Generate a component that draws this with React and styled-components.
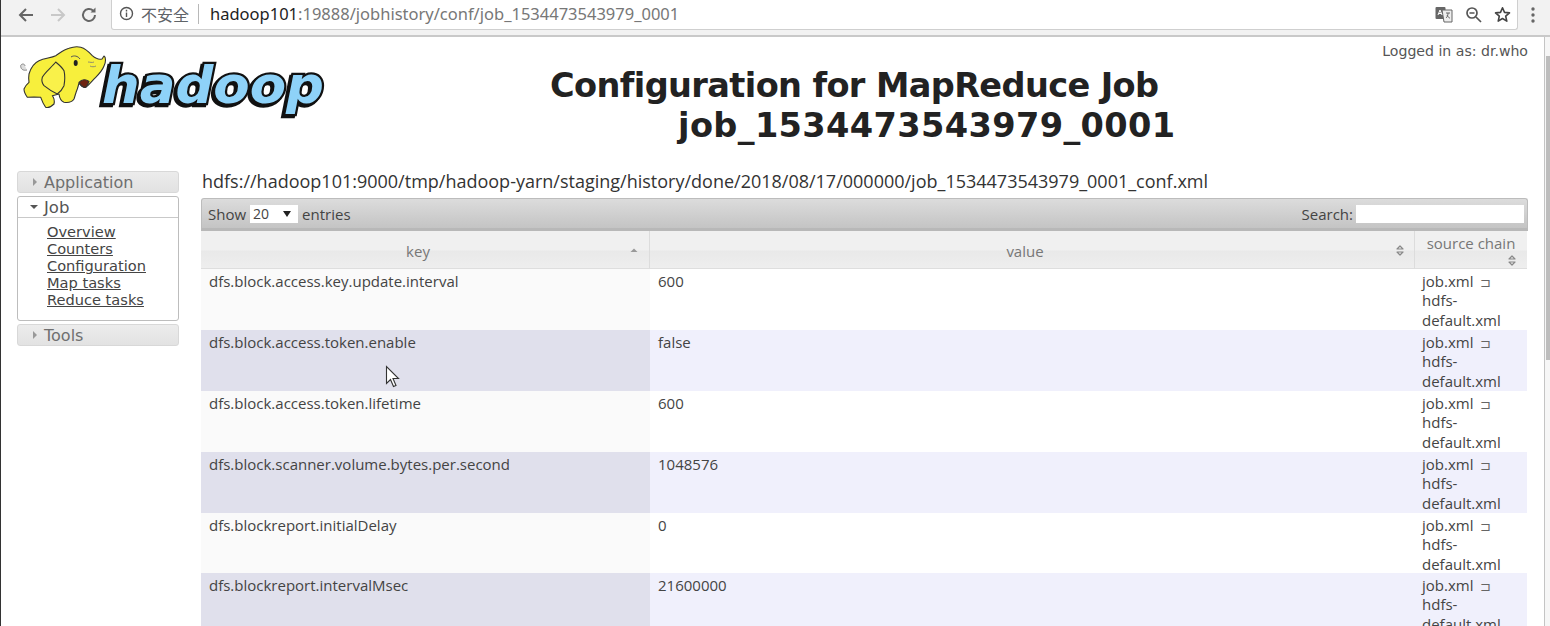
import React from 'react';
import styled, { createGlobalStyle } from 'styled-components';

const Global = createGlobalStyle`
  html, body { margin: 0; padding: 0; height: 626px; overflow: hidden; background: #fff; }
  * { box-sizing: border-box; }
`;
const Shell = styled.div`
  width: 1550px; height: 626px; display: flex; flex-direction: column; position: relative; overflow: hidden;
  border-left: 1px solid #333; color: #333;
`;
const ChromeBar = styled.header`
  height: 37px; flex: none; background: #f2f2f2; border-bottom: 2px solid #c9c9c9;
  display: flex; align-items: flex-start; padding: 0 0 0 16px;
`;
const NavIcons = styled.div`
  display: flex; width: 94px; height: 29px; align-items: center; gap: 9px; flex: none;
`;
const AddressBar = styled.div`
  width: 1407px; height: 30px; flex: none; background: #fff; border: 1px solid #cfcfcf; border-top: 0; border-radius: 0 0 3px 3px;
  display: flex; align-items: center; padding: 0 6px 2px 7px; font: 16.5px "Noto Sans", "Noto Sans CJK SC", sans-serif;
`;
const Insecure = styled.span`
  font: 16px "Noto Sans CJK SC", sans-serif; color: #5f6368; margin-left: 7px; padding-right: 9px; margin-right: 11px;
  border-right: 1px solid #b8b8b8; line-height: 20px;
`;
const Host = styled.span` color: #222; `;
const Path = styled.span` color: #777; `;
const AddressEnd = styled.div`
  margin-left: auto; display: flex; align-items: center; gap: 12px; padding-top: 2px;
`;
const MoreDots = styled.div`
  width: 30px; height: 30px; display: flex; align-items: center; justify-content: center; flex: none;
`;
const Viewport = styled.div` flex: 1; display: flex; min-height: 0; `;
const Page = styled.main`
  width: 1544px; flex: none; border-right: 1px solid #c4c4c4; padding: 0 16px 0 16px; overflow: hidden;
  font-family: "DejaVu Sans", sans-serif;
`;
const Gutter = styled.div` flex: 1; background: #f6f6f6; padding: 19px 0 0 1px; `;
const Thumb = styled.div` height: 304px; background: #bdbdbd; `;
const Masthead = styled.div`
  height: 133px; display: flex; position: relative;
`;
const LogoWrap = styled.div` width: 320px; flex: none; padding: 5px 0 0 1px; `;
const TitleBlock = styled.h1`
  margin: 0; padding: 29px 0 0 213px; font: bold 33.6px/40px "DejaVu Sans", sans-serif; color: #222; white-space: nowrap;
`;
const TitleLine = styled.div`
  padding-left: ${p => p.$indent || 0}px; letter-spacing: ${p => p.$spacing}px;
`;
const LoggedIn = styled.div`
  position: absolute; right: 0; top: 6px; font-size: 14.1px; color: #555;
`;
const Columns = styled.div` display: flex; gap: 22px; align-items: flex-start; `;
const Sidebar = styled.nav` width: 162px; flex: none; display: flex; flex-direction: column; gap: 3px; margin-top: 1px; `;
const ClosedHead = styled.div`
  height: 22px; border: 1px solid #d8d8d8; border-radius: 3px; display: flex; align-items: center;
  background: linear-gradient(#ececec, #e2e2e2); color: #6f6f6f; font-size: 16px; padding-left: 14px; gap: 6px;
`;
const OpenPanel = styled.div` border: 1px solid #bdbdbd; border-radius: 3px; background: #fff; height: 125px; `;
const OpenHead = styled.div`
  height: 21px; border-bottom: 1px solid #c9c9c9; display: flex; align-items: center; padding-left: 12px; gap: 6px; font-size: 16.5px; color: #555;
`;
const NavList = styled.div` display: flex; flex-direction: column; padding: 5px 0 0 29px; `;
const NavLink = styled.a` font-size: 14.6px; line-height: 17.1px; color: #444; text-decoration: underline; `;
const Content = styled.section` flex: 1; min-width: 0; `;
const FilePath = styled.div`
  height: 28px; padding-left: 1px; font: 18px/22px "Open Sans", sans-serif; color: #333; white-space: nowrap;
`;
const TableBar = styled.div`
  height: 33px; background: linear-gradient(#dcdcdc, #c4c4c4); border: 1px solid #bcbcbc; border-bottom: 3px solid #b8b8b8; border-radius: 3px 3px 0 0;
  display: flex; align-items: center; justify-content: space-between; padding: 0 3px 0 6px;
  font: 15px "Open Sans", sans-serif; color: #444;
`;
const Show = styled.div` display: flex; align-items: center; gap: 4px; `;
const Select = styled.div`
  width: 48px; height: 18px; background: #fff; display: flex; align-items: center; justify-content: space-between; padding: 0 7px 0 3px; font-size: 14px; color: #444;
`;
const Caret = styled.span`
  width: 0; height: 0; border-left: 4px solid transparent; border-right: 4px solid transparent; border-top: 6px solid #222;
`;
const SearchBox = styled.div` display: flex; align-items: center; gap: 3px; `;
const SearchInput = styled.div` width: 168px; height: 18px; background: #fff; `;
const Table = styled.div`
  display: grid; grid-template-columns: 449px 765px 112px; font: 15px/19.4px "Open Sans", sans-serif; color: #444;
`;
const HeadCell = styled.div`
  height: 38px; background: linear-gradient(#f0f0f0 0%, #f0f0f0 50%, #e9e9e9 55%, #eeeeee 100%); border-right: 1px solid #dcdcdc; border-bottom: 1px solid #dedede;
  display: flex; align-items: center; justify-content: center; position: relative; color: #777; font-size: 15px; padding: 4px 14px 0 0;
`;
const SortMark = styled.svg` position: absolute; right: ${p => p.$right}px; top: ${p => p.$top}px; `;
const SourceHead = styled(HeadCell)` align-items: flex-start; padding: 3px 0 0; border-right: 0; `;
const Cell = styled.div`
  height: ${p => p.$h}px; padding: 3px 8px 0; background: ${p => p.$bg};
`;
const SourceCell = styled(Cell)` padding-left: 7px; `;
const Chain = styled.span` color: #666; padding-left: 3px; font-size: 13px; line-height: 1; `;
const Cursor = styled.svg` position: absolute; left: 384px; top: 365px; `;

const Sort = ({ right, top, up }) => (
  <SortMark $right={right} $top={top} width="10" height="13" viewBox="0 0 10 13">
    {up ? <path d="M1.5 8 L5 4.5 L8.5 8 Z" fill="#999" /> : (
      <path d="M2 5 L5 2 L8 5 Z M2 8 L5 11 L8 8 Z" fill="none" stroke="#888" strokeWidth="1.2" strokeLinejoin="round" />
    )}
  </SortMark>
);

const Logo = () => (
  <svg width="312" height="80" viewBox="0 0 312 80">
    <text x="84" y="61" fontFamily="'DejaVu Sans', sans-serif" fontWeight="700" fontStyle="italic" fontSize="52"
      textLength="222" lengthAdjust="spacingAndGlyphs" fill="#8ed2f8" stroke="#111" strokeWidth="4.5" paintOrder="stroke" strokeLinejoin="miter"
      style={{ filter: 'drop-shadow(-2px 2px 0 #111)' }}>hadoop</text>
    <path d="M9 28 C5 29 2.5 27 2.7 23.5 C4 21 7 22 7 24" fill="#ddd" stroke="#888" strokeWidth="1" />
    <g stroke="#333" strokeWidth="1.1" strokeLinejoin="round">
      <path d="M11 32 C13 25 16 21 21 18.7 C27 16 33 16 37.7 13.7 C42 11 46 7.5 51 6.3 C56 4.5 60 4.5 62.7 5.3 C67 6.5 71 10 74.3 13.7 C77 16 81 18 84 17 L86 14 C88 15 88 20 86 24 C84.5 28 81 32 77.7 35.3 C74 39 71 43 67.7 45.3 C65 46 63 44 61 41 C60.5 43 60 45 59.3 47 C58 50 57 54 56 57 C54 60 50 61 46 60.3 C43 59 41.5 56 41 52 L34.3 53.7 C36 56 36.5 60 36 62 C33 65 30 66 27.7 65.3 C25 62 24 59 22.7 55.3 L16 55 L9.3 55.3 C7 52 6 50 6 47 C7 44 9 42 11 40.3 C10.5 37 10.5 35 11 32 Z" fill="#f7ef3c" />
      <path d="M37.7 20 C34 25 27 30 24.3 35.3 C23.5 38 24 41 26 43.7 C30 47 35 50 39.3 52 C42 50 44.5 47 46 43.7 C47 38 47 33 46 28.7 C44 25 40 22 37.7 20 Z" fill="#f9f14a" />
      <path d="M61 40.3 C64 37 68 37 71 39.5 C70 42 69 44 67.7 45.3 C65 46 63 44 61 40.3 Z" fill="#6e2412" />
    </g>
    <ellipse cx="57.7" cy="21" rx="2" ry="3" fill="#222" />
    <path d="M53 15 C56 13 60 14 62 17" fill="none" stroke="#555" strokeWidth="1" />
    <path d="M70 20 C72 20 74 21 76 20 M72 24 C74 25 76 25 78 24" fill="none" stroke="#777" strokeWidth="0.8" />
  </svg>
);

const rows = [
  ['dfs.block.access.key.update.interval', '600', 61],
  ['dfs.block.access.token.enable', 'false', 61],
  ['dfs.block.access.token.lifetime', '600', 61],
  ['dfs.block.scanner.volume.bytes.per.second', '1048576', 61],
  ['dfs.blockreport.initialDelay', '0', 60],
  ['dfs.blockreport.intervalMsec', '21600000', 61],
];

export default function App() {
  return (
    <Shell>
      <Global />
      <ChromeBar>
        <NavIcons>
          <svg width="18" height="18" viewBox="0 0 18 18" fill="none" stroke="#666" strokeWidth="2"><path d="M16 9H3M9 3L3 9l6 6" /></svg>
          <svg width="18" height="18" viewBox="0 0 18 18" fill="none" stroke="#c8c8c8" strokeWidth="2" style={{ marginLeft: 5 }}><path d="M2 9h13M9 3l6 6-6 6" /></svg>
          <svg width="18" height="18" viewBox="0 0 18 18" fill="none" stroke="#666" strokeWidth="2" style={{ marginLeft: 4 }}><path d="M15 9a6 6 0 1 1-1.8-4.3" /><path d="M15.5 1.5v5h-5" fill="#666" stroke="none" /></svg>
        </NavIcons>
        <AddressBar>
          <svg width="15" height="15" viewBox="0 0 15 15" fill="none" stroke="#555" strokeWidth="1.4"><circle cx="7.5" cy="7.5" r="6" /><path d="M7.5 6.5v4.5M7.5 3.8v1.6" /></svg>
          <Insecure>不安全</Insecure>
          <Host>hadoop101</Host><Path>:19888/jobhistory/conf/job_1534473543979_0001</Path>
          <AddressEnd>
            <svg width="18" height="17" viewBox="0 0 18 17">
              <rect x="0.5" y="1" width="10" height="12" rx="1" fill="#666" />
              <path d="M7 4h10v12H9z" fill="#eee" stroke="#666" strokeWidth="1" />
              <path d="M11 7h4M13 7c0 3-1 4-2 5M12 9c1 2 2 3 3 3" stroke="#666" fill="none" strokeWidth="1" />
              <path d="M3 9l2-5 2 5M3.8 7.5h2.4" stroke="#fff" fill="none" strokeWidth="1" />
            </svg>
            <svg width="17" height="17" viewBox="0 0 17 17" fill="none" stroke="#555" strokeWidth="1.7"><circle cx="7" cy="7" r="5" /><path d="M4.5 7h5M11 11l5 5" /></svg>
            <svg width="17" height="17" viewBox="0 0 17 17" fill="none" stroke="#444" strokeWidth="1.6" strokeLinejoin="round"><path d="M8.5 1.8l2 4.6 5 .5-3.8 3.3 1.1 4.9-4.3-2.6-4.3 2.6 1.1-4.9L1.5 6.9l5-.5z" /></svg>
          </AddressEnd>
        </AddressBar>
        <MoreDots>
          <svg width="4" height="16" viewBox="0 0 4 16" fill="#666"><circle cx="2" cy="2" r="1.7" /><circle cx="2" cy="8" r="1.7" /><circle cx="2" cy="14" r="1.7" /></svg>
        </MoreDots>
      </ChromeBar>
      <Viewport>
        <Page>
          <Masthead>
            <LogoWrap><Logo /></LogoWrap>
            <TitleBlock>
              <TitleLine $spacing={-0.62}>Configuration for MapReduce Job</TitleLine>
              <TitleLine $indent={128} $spacing={0.37}>job_1534473543979_0001</TitleLine>
            </TitleBlock>
            <LoggedIn>Logged in as: dr.who</LoggedIn>
          </Masthead>
          <Columns>
            <Sidebar>
              <ClosedHead><svg width="6" height="8" viewBox="0 0 6 8"><path d="M1 0l4 4-4 4z" fill="#999" /></svg>Application</ClosedHead>
              <OpenPanel>
                <OpenHead><svg width="8" height="6" viewBox="0 0 8 6"><path d="M0 1h8L4 5z" fill="#555" /></svg>Job</OpenHead>
                <NavList>
                  {['Overview', 'Counters', 'Configuration', 'Map tasks', 'Reduce tasks'].map(t => <NavLink key={t}>{t}</NavLink>)}
                </NavList>
              </OpenPanel>
              <ClosedHead><svg width="6" height="8" viewBox="0 0 6 8"><path d="M1 0l4 4-4 4z" fill="#999" /></svg>Tools</ClosedHead>
            </Sidebar>
            <Content>
              <FilePath>hdfs://hadoop101:9000/tmp/hadoop-yarn/staging/history/done/2018/08/17/000000/job_1534473543979_0001_conf.xml</FilePath>
              <TableBar>
                <Show>Show <Select>20<Caret /></Select> entries</Show>
                <SearchBox>Search: <SearchInput /></SearchBox>
              </TableBar>
              <Table>
                <HeadCell>key<Sort right={10} top={13} up /></HeadCell>
                <HeadCell>value<Sort right={9} top={13} /></HeadCell>
                <SourceHead>source chain<Sort right={10} top={23} /></SourceHead>
                {rows.map(([k, v, h], i) => (
                  <React.Fragment key={k}>
                    <Cell $h={h} $bg={i % 2 ? '#e0e0ec' : '#fafafa'}>{k}</Cell>
                    <Cell $h={h} $bg={i % 2 ? '#f0f0fc' : '#fff'}>{v}</Cell>
                    <SourceCell $h={h} $bg={i % 2 ? '#f0f0fc' : '#fff'}>job.xml <Chain>⊐</Chain><br />hdfs-<br />default.xml</SourceCell>
                  </React.Fragment>
                ))}
              </Table>
            </Content>
          </Columns>
        </Page>
        <Gutter><Thumb /></Gutter>
      </Viewport>
      <Cursor width="16" height="24" viewBox="0 0 16 24"><path d="M1.5 1.5v17l4-4 3 7 2.5-1-3-7h5.5z" fill="#fff" stroke="#333" strokeWidth="1.1" /></Cursor>
    </Shell>
  );
}
